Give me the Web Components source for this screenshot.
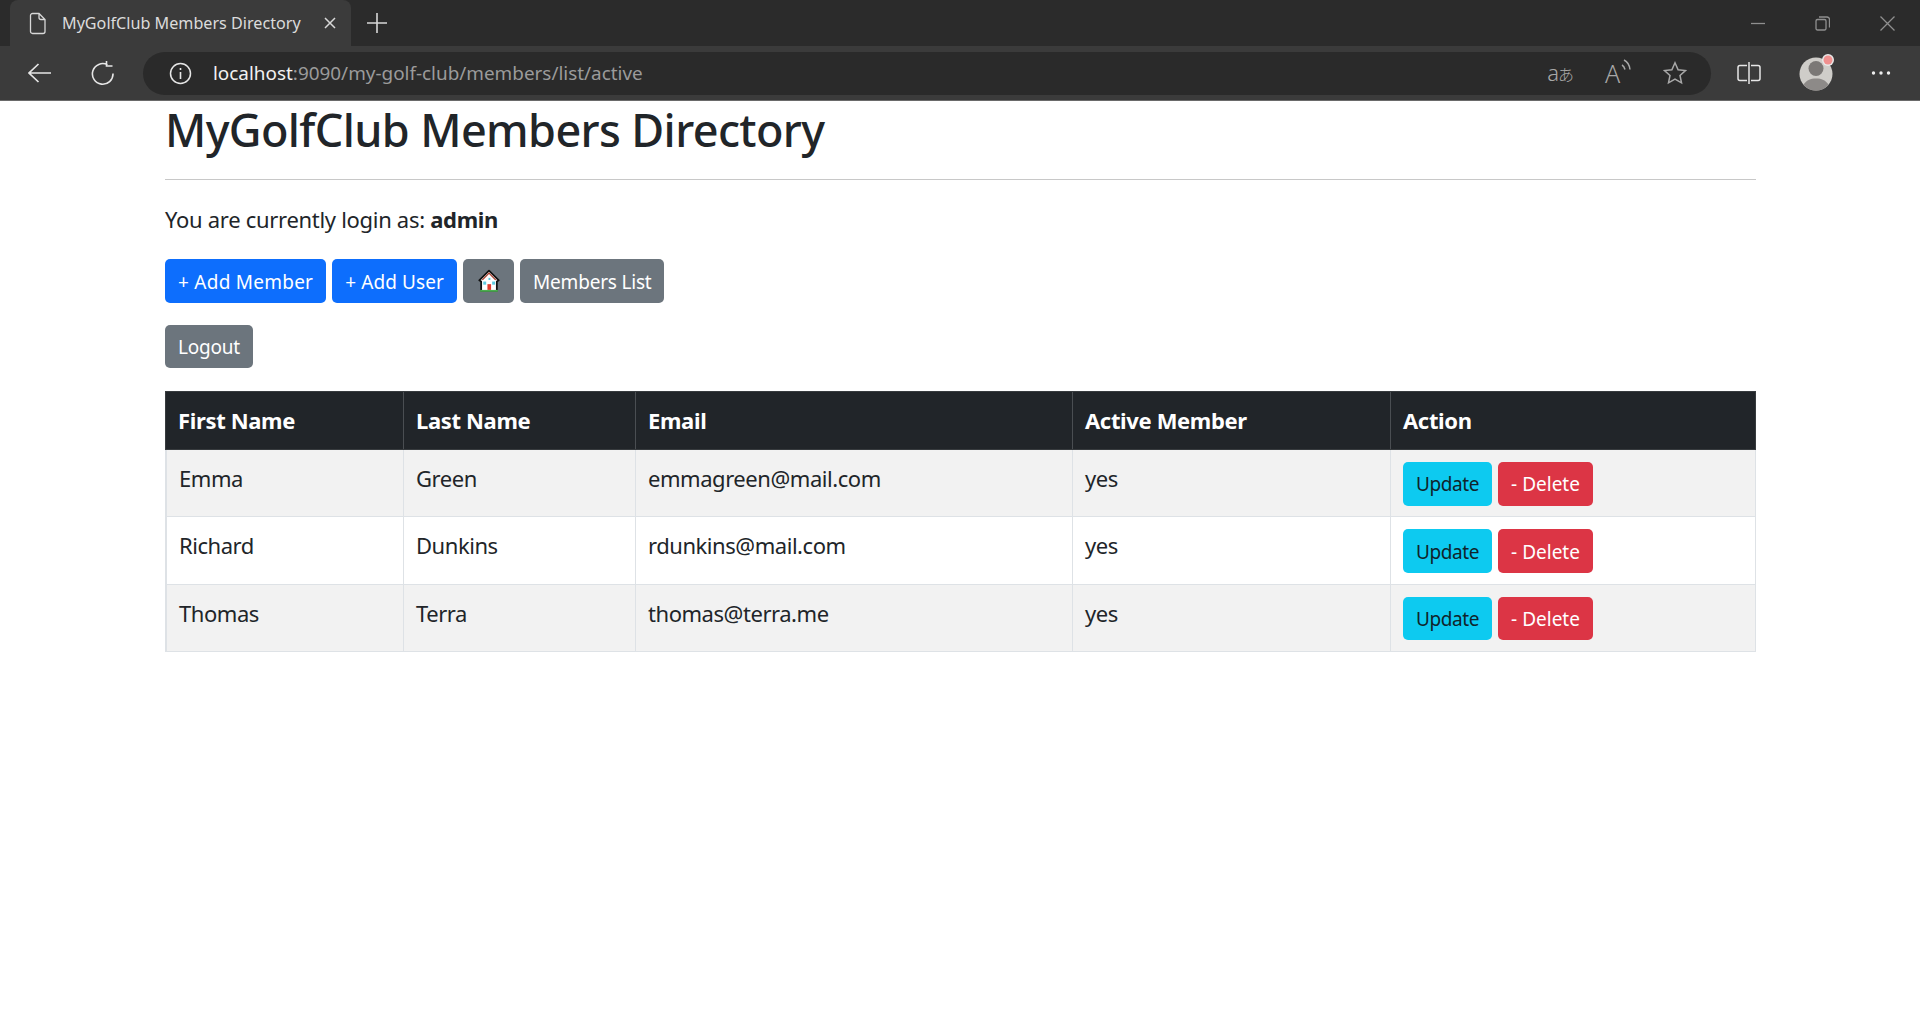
<!DOCTYPE html>
<html>
<head>
<meta charset="utf-8">
<title>MyGolfClub Members Directory</title>
<style>
  html, body { margin: 0; background: #fff; }
  body { font-family: "Noto Sans", "Open Sans", sans-serif; color: #212529; }
  .row { display: flex; gap: 6px; }
</style>
</head>
<body>
<browser-chrome url-host="localhost" url-path=":9090/my-golf-club/members/list/active" tab-title="MyGolfClub Members Directory"></browser-chrome>
<directory-page>
  <span slot="title">MyGolfClub Members Directory</span>
  <span slot="login">You are currently login as: <b>admin</b></span>
  <div slot="actions" class="row">
    <app-button kind="primary">+ Add Member</app-button>
    <app-button kind="primary" style="letter-spacing: .1px">+ Add User</app-button>
    <app-button kind="secondary" icon><house-icon></house-icon></app-button>
    <app-button kind="secondary">Members List</app-button>
  </div>
  <div slot="logout"><app-button kind="secondary">Logout</app-button></div>
  <member-table>
    <member-row first="Emma" last="Green" email="emmagreen@mail.com" active="yes"></member-row>
    <member-row first="Richard" last="Dunkins" email="rdunkins@mail.com" active="yes" plain></member-row>
    <member-row first="Thomas" last="Terra" email="thomas@terra.me" active="yes"></member-row>
  </member-table>
</directory-page>

<script>
class BrowserChrome extends HTMLElement {
  constructor() {
    super();
    this.attachShadow({ mode: "open" });
  }

  connectedCallback() {
    this.shadowRoot.innerHTML = `
      <style>
        :host { display: block; font-family: "Noto Sans", sans-serif; }
        svg { display: block; fill: none; stroke: currentColor; stroke-width: 1.3; }
        .strip { height: 46px; background: #2b2b2b; display: flex; align-items: flex-end; padding-left: 10px; color: #d8d8d8; }
        .tab { width: 341px; height: 46px; background: #3b3b3b; border-radius: 8px 8px 0 0; display: flex; align-items: center; box-sizing: border-box; padding-left: 18px; }
        .tab span { font-size: 16.150px; margin-left: 14px; flex: 1; white-space: nowrap; color: #dcdcdc; }
        .tab svg { flex: none; }
        .tab .close { margin-right: 14px; }
        .plus { margin-left: 15px; margin-top: -1px; align-self: center; }
        .winctl { margin-left: auto; display: flex; align-self: center; color: #8f8f8f; gap: 50px; padding-right: 25px; align-items: center; }
        .toolbar { height: 55px; background: #3b3b3b; border-bottom: 1px solid #6a6a6a; box-sizing: border-box; display: flex; align-items: center; color: #e6e6e6; }
        .nav { margin-left: 28px; }
        .reload { margin-left: 39px; }
        .omni { margin-left: 28px; width: 1568px; height: 43px; border-radius: 22px; background: #2a2a2a; display: flex; align-items: center; box-sizing: border-box; padding-left: 26px; }
        .url { margin-left: 21px; font-size: 18.900px; color: #9b9b9b; white-space: nowrap; flex: 1; }
        .url b { font-weight: 400; color: #f2f2f2; }
        .omni-icons { display: flex; align-items: center; gap: 32px; color: #a8a8a8; padding-right: 24px; }
        .translate { font-size: 22px; line-height: 24px; font-family: "Noto Sans", "Noto Sans CJK JP", sans-serif; font-weight: 300; letter-spacing: -1px; display: flex; align-items: baseline; }
        .translate i { font-style: normal; font-size: 16px; }
        .read { position: relative; width: 26px; height: 26px; font-size: 25px; line-height: 26px; font-weight: 300; font-family: "Noto Sans", sans-serif; }
        .read svg { position: absolute; right: -1px; top: -1px; }
        .split { margin-left: 26px; }
        .avatar { margin-left: 37px; }
        .more { margin-left: 34.500px; }
      </style>
      <div class="strip">
        <div class="tab">
          <svg width="20" height="23" viewBox="0 0 20 23"><path d="M2.500 3.500a2 2 0 0 1 2-2h6.500l6 6v12a2 2 0 0 1-2 2h-10.500a2 2 0 0 1-2-2zM11 1.500v4a2 2 0 0 0 2 2h4"/></svg>
          <span>${this.getAttribute("tab-title")}</span>
          <svg class="close" width="14" height="14" viewBox="0 0 14 14"><path d="M2 2l10 10M12 2L2 12" stroke-width="1.500"/></svg>
        </div>
        <svg class="plus" width="22" height="22" viewBox="0 0 22 22"><path d="M11 1v20M1 11h20" stroke-width="1.600"/></svg>
        <div class="winctl">
          <svg width="14" height="14" viewBox="0 0 14 14"><path d="M0 7.500h14"/></svg>
          <svg width="15" height="15" viewBox="0 0 15 15"><path d="M1 5a1.500 1.500 0 0 1 1.500-1.500h7a1.500 1.500 0 0 1 1.500 1.500v7.500a1.500 1.500 0 0 1-1.500 1.500h-7a1.500 1.500 0 0 1-1.500-1.500zM4 1h8a2.500 2.500 0 0 1 2.500 2.500v8"/></svg>
          <svg width="15" height="15" viewBox="0 0 15 15"><path d="M.5.500l14 14M14.500.500l-14 14"/></svg>
        </div>
      </div>
      <div class="toolbar">
        <svg class="nav" width="24" height="20" viewBox="0 0 24 20"><path d="M1 10h22M10.500 1L1 10l9.500 9" stroke-width="1.700"/></svg>
        <svg class="reload" width="24" height="26" viewBox="0 0 24 26"><path d="M16.500 4.800A10.300 10.300 0 1 0 22 13.500M15.500 1v5h6" stroke-width="1.600"/></svg>
        <div class="omni">
          <svg width="23" height="23" viewBox="0 0 23 23"><circle cx="11.500" cy="11.500" r="10" stroke-width="1.500"/><path d="M11.500 10v7M11.500 6v2" stroke-width="1.600"/></svg>
          <div class="url"><b>${this.getAttribute("url-host")}</b>${this.getAttribute("url-path")}</div>
          <div class="omni-icons">
            <div class="translate">a<i>あ</i></div>
            <div class="read">A<svg width="11" height="14" viewBox="0 0 11 14"><path d="M1 6c1.500.8 2.500 2.500 3 4.500M3 1c3 1.500 5.500 5 6 9.500" stroke-width="1.500"/></svg></div>
            <svg width="24" height="24" viewBox="0 0 24 24"><path d="M12 1.800l3.100 6.900 7.400.8-5.500 5 1.500 7.400L12 18.200l-6.500 3.700L7 14.500l-5.500-5 7.400-.8z" stroke-width="1.500"/></svg>
          </div>
        </div>
        <svg class="split" width="24" height="24" viewBox="0 0 24 24"><path d="M12 1v22M10 4.500H3a2 2 0 0 0-2 2v11a2 2 0 0 0 2 2h7M14 4.500h7a2 2 0 0 1 2 2v11a2 2 0 0 1-2 2h-7" stroke-width="1.500"/></svg>
        <svg class="avatar" width="38" height="38" viewBox="0 0 38 38" style="stroke:none;overflow:visible">
          <circle cx="18" cy="20" r="16.500" fill="#cfcdc9"/>
          <circle cx="18" cy="14.500" r="7.500" fill="#7b7876"/>
          <path d="M5.600 31a16.500 16.500 0 0 0 24.800 0C28 26 23.500 24.500 18 24.500S8 26 5.600 31z" fill="#8d8a88"/>
          <circle cx="30" cy="6" r="6" fill="#e8e8e8"/><circle cx="30" cy="6" r="4.500" fill="#f0908f"/>
        </svg>
        <svg class="more" width="20" height="6" viewBox="0 0 20 6" style="stroke:none"><circle cx="2.500" cy="3" r="1.700" fill="#eee"/><circle cx="10" cy="3" r="1.700" fill="#eee"/><circle cx="17.500" cy="3" r="1.700" fill="#eee"/></svg>
      </div>
    `;
  }
}

class DirectoryPage extends HTMLElement {
  constructor() {
    super();
    this.attachShadow({ mode: "open" });
    this.shadowRoot.innerHTML = `
      <style>
        :host { display: block; padding: 0 164px 0 165px; font-size: 22px; color: #212529; }
        h1 { margin: 0 0 20px; font-size: 45px; line-height: 58px; font-weight: 500; letter-spacing: -.62px; color: #212529; }
        hr { margin: 0; border: 0; border-top: 1px solid #c8c8c8; }
        .login { margin-top: 24px; line-height: 31px; height: 31px; letter-spacing: -.3px; }
        .actions { margin-top: 24px; }
        .logout { margin-top: 22px; }
        .table { margin-top: 23px; }
      </style>
      <h1><slot name="title"></slot></h1>
      <hr>
      <div class="login"><slot name="login"></slot></div>
      <div class="actions"><slot name="actions"></slot></div>
      <div class="logout"><slot name="logout"></slot></div>
      <div class="table"><slot></slot></div>
    `;
  }
}

class AppButton extends HTMLElement {
  constructor() {
    super();
    this.attachShadow({ mode: "open" });
    this.shadowRoot.innerHTML = `
      <style>
        :host { display: inline-flex; align-items: center; justify-content: center; height: 43.500px; padding: 2px 13px 0; border-radius: 5px; font-size: 19px; color: #fff; box-sizing: border-box; white-space: nowrap; }
        :host([kind="primary"]) { background: #0d6efd; letter-spacing: .25px; }
        :host([kind="secondary"]) { background: #6c757d; letter-spacing: -.2px; }
        :host([kind="info"]) { background: #0dcaf0; color: #10242b; letter-spacing: -.4px; }
        :host([kind="danger"]) { background: #dc3545; letter-spacing: 0; }
        :host([icon]) { padding: 0 14.500px; }
      </style>
      <slot></slot>
    `;
  }
}

class HouseIcon extends HTMLElement {
  constructor() {
    super();
    this.attachShadow({ mode: "open" });
    this.shadowRoot.innerHTML = `
      <style>:host { display: block; } svg { display: block; }</style>
      <svg width="22" height="23" viewBox="0 0 21 22">
        <path d="M10.500 1.500L1.200 10.800 3 12v9h15v-9l1.800-1.200z" fill="#fff" stroke="#111" stroke-width="1.700" stroke-linejoin="round"/>
        <path d="M10.500 3.200L3.600 10.200l1 .6 5.900-5.900 5.900 5.900 1-.6z" fill="#a83a28"/>
        <rect x="9" y="14.500" width="3.500" height="5.500" fill="#e23b2d"/>
        <rect x="5" y="12" width="2.800" height="3" fill="#5fcbe0"/>
        <rect x="13.500" y="12" width="2.800" height="3" fill="#5fcbe0"/>
        <rect x="10" y="8.500" width="1.800" height="2" fill="#5fcbe0"/>
        <rect x="2" y="20" width="17" height="1.800" fill="#4caf50"/>
      </svg>
    `;
  }
}

const COLS = "237px 232px 437px 318px 1fr";

class MemberTable extends HTMLElement {
  constructor() {
    super();
    this.attachShadow({ mode: "open" });
    this.shadowRoot.innerHTML = `
      <style>
        :host { display: block; font-size: 22px; letter-spacing: -.45px; }
        .head { display: grid; grid-template-columns: ${COLS}; height: 59px; background: #212529; color: #fff; font-weight: 700; box-sizing: border-box; border: 1px solid #373b3e; letter-spacing: -.35px; }
        .head div { padding: 12px 12px 0; border-left: 1px solid #4a4e52; line-height: 33px; }
        .head div:first-child { border-left: 0; }
      </style>
      <div class="head"><div>First Name</div><div>Last Name</div><div>Email</div><div>Active Member</div><div>Action</div></div>
      <slot></slot>
    `;
  }
}

class MemberRow extends HTMLElement {
  constructor() {
    super();
    this.attachShadow({ mode: "open" });
  }

  connectedCallback() {
    const a = (n) => this.getAttribute(n);
    this.shadowRoot.innerHTML = `
      <style>
        :host { display: grid; grid-template-columns: ${COLS}; height: 67.300px; box-sizing: border-box; background: #f2f2f2; border: 1px solid #dee2e6; border-top: 0; }
        :host([plain]) { background: #fff; }
        .c { padding: 12px 12px 0; border-left: 1px solid #dee2e6; line-height: 33px; box-sizing: border-box; }
        .c:first-child { border-left: 0; padding-left: 9.500px; }
        .acts { display: flex; gap: 6px; align-items: flex-start; }
      </style>
      <div class="c">${a("first")}</div>
      <div class="c">${a("last")}</div>
      <div class="c">${a("email")}</div>
      <div class="c">${a("active")}</div>
      <div class="c acts"><app-button kind="info">Update</app-button><app-button kind="danger">- Delete</app-button></div>
    `;
  }
}

customElements.define("browser-chrome", BrowserChrome);
customElements.define("directory-page", DirectoryPage);
customElements.define("app-button", AppButton);
customElements.define("house-icon", HouseIcon);
customElements.define("member-table", MemberTable);
customElements.define("member-row", MemberRow);
</script>
</body>
</html>
